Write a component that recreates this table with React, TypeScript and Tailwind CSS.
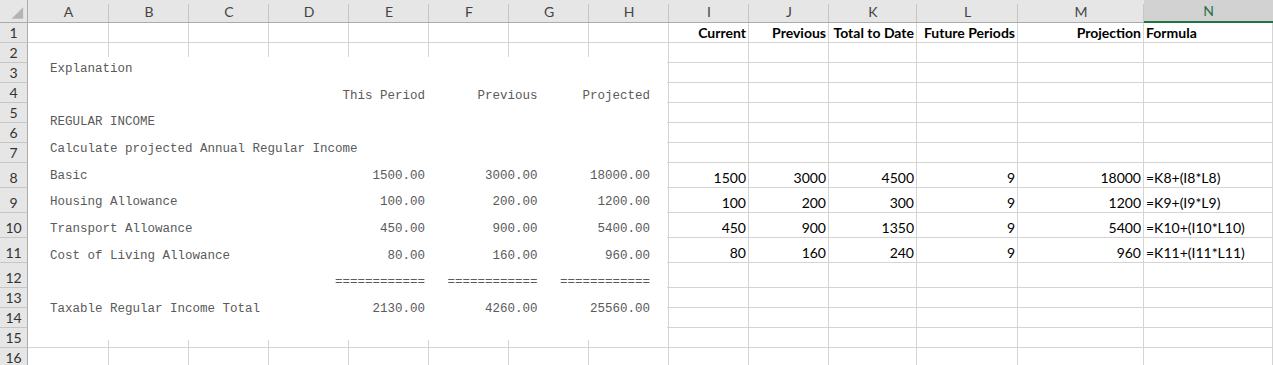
import type { ReactNode } from 'react'

// Column letters and widths (row header first)
const COLUMNS = ['A', 'B', 'C', 'D', 'E', 'F', 'G', 'H', 'I', 'J', 'K', 'L', 'M', 'N']

type Cell = { text: string; bold?: boolean; align?: 'left' | 'right' }

// Sheet cells keyed by row -> column letter
const CELLS: Record<number, Record<string, Cell>> = {
  1: {
    I: { text: 'Current', bold: true },
    J: { text: 'Previous', bold: true },
    K: { text: 'Total to Date', bold: true },
    L: { text: 'Future Periods', bold: true },
    M: { text: 'Projection', bold: true },
    N: { text: 'Formula', bold: true, align: 'left' },
  },
  8: { I: { text: '1500' }, J: { text: '3000' }, K: { text: '4500' }, L: { text: '9' }, M: { text: '18000' }, N: { text: '=K8+(I8*L8)', align: 'left' } },
  9: { I: { text: '100' }, J: { text: '200' }, K: { text: '300' }, L: { text: '9' }, M: { text: '1200' }, N: { text: '=K9+(I9*L9)', align: 'left' } },
  10: { I: { text: '450' }, J: { text: '900' }, K: { text: '1350' }, L: { text: '9' }, M: { text: '5400' }, N: { text: '=K10+(I10*L10)', align: 'left' } },
  11: { I: { text: '80' }, J: { text: '160' }, K: { text: '240' }, L: { text: '9' }, M: { text: '960' }, N: { text: '=K11+(I11*L11)', align: 'left' } },
}

const ROW_COUNT = 16
const TALL_ROWS = [8, 9, 10, 11, 12]

// Text box content, laid out on fixed character columns
function line(label: string, a = '', b = '', c = '') {
  return label.padEnd(38) + a.padStart(12) + b.padStart(15) + c.padStart(15)
}

const BOX_LINES = [
  line('Explanation'),
  line('', 'This Period', 'Previous', 'Projected'),
  line('REGULAR INCOME'),
  line('Calculate projected Annual Regular Income'),
  line('Basic', '1500.00', '3000.00', '18000.00'),
  line('Housing Allowance', '100.00', '200.00', '1200.00'),
  line('Transport Allowance', '450.00', '900.00', '5400.00'),
  line('Cost of Living Allowance', '80.00', '160.00', '960.00'),
  line('', '============', '============', '============'),
  line('Taxable Regular Income Total', '2130.00', '4260.00', '25560.00'),
]

function ColumnHeader({ letter }: { letter: string }) {
  const selected = letter === 'N'
  return (
    <div
      className={
        selected
          ? 'h-[23px] flex items-center justify-center bg-[#d2d2d2] text-[#217346] border-b-2 border-[#217346] text-[14px]'
          : "relative h-[23px] flex items-center justify-center bg-[#e6e6e6] text-[#444] border-b border-[#ababab] text-[14px] after:content-[''] after:absolute after:right-0 after:top-[4px] after:bottom-0 after:w-px after:bg-[#c6c6c6]"
      }
    >
      {letter}
    </div>
  )
}

function SheetCell({ row, col }: { row: number; col: string }) {
  const cell = CELLS[row]?.[col]
  const tall = TALL_ROWS.includes(row)
  let content: ReactNode = null
  if (cell) {
    content = (
      <span className={cell.bold ? 'font-bold text-black' : 'text-black'}>{cell.text}</span>
    )
  }
  return (
    <div
      className={[
        tall ? 'h-[25px]' : 'h-5',
        'flex items-end pb-[1px] border-r border-b border-[#d4d4d4] text-[14px] leading-[17px] whitespace-nowrap',
        cell?.align === 'left' ? 'justify-start pl-[2px]' : 'justify-end pr-[2px]',
      ].join(' ')}
    >
      {content}
    </div>
  )
}

export default function App() {
  const rows = Array.from({ length: ROW_COUNT }, (_, i) => i + 1)

  return (
    <div className="relative w-[1273px] h-[365px] overflow-hidden bg-white font-['Lato','Liberation_Sans',sans-serif]">
      <div className="grid grid-cols-[28px_81px_repeat(9,80px)_88px_101px_126px_129px]">
        {/* corner */}
        <div className="h-[23px] bg-[#e6e6e6] border-r border-b border-[#ababab] flex items-end justify-end">
          <svg width="28" height="23" viewBox="0 0 28 23">
            <polygon points="24,8 24,20 12,20" fill="#b4b4b4" />
          </svg>
        </div>
        {COLUMNS.map((c) => (
          <ColumnHeader key={c} letter={c} />
        ))}

        {rows.map((r) => (
          <div key={r} className="contents">
            <div
              className={[
                TALL_ROWS.includes(r) ? 'h-[25px]' : 'h-5',
                'flex items-end justify-center pb-[1px] bg-[#e6e6e6] border-r border-b border-r-[#ababab] border-b-[#c6c6c6] text-[14px] leading-[17px] text-[#333]',
              ].join(' ')}
            >
              {r}
            </div>
            {COLUMNS.map((c) => (
              <SheetCell key={c} row={r} col={c} />
            ))}
          </div>
        ))}
      </div>

      {/* floating text box over A2:H15 */}
      <div className="absolute left-[28px] top-[57px] w-[639px] h-[283px] bg-white overflow-hidden">
        <pre className="-mt-[1px] pl-[22px] font-['Liberation_Mono',monospace] text-[12.5px] leading-[26.67px] text-[#5a5a5a]">
          {BOX_LINES.join('\n')}
        </pre>
      </div>
    </div>
  )
}
